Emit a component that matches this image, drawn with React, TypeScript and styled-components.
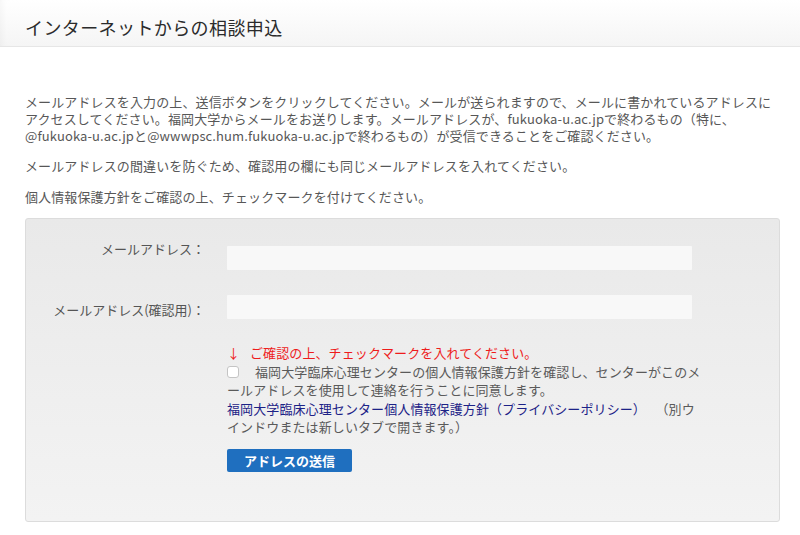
import React from "react";
import styled, { createGlobalStyle } from "styled-components";

const GlobalStyle = createGlobalStyle`
	html, body {
		margin: 0;
		padding: 0;
		background: #ffffff;
	}
	body {
		font-family: "Noto Sans CJK JP", "Noto Sans", sans-serif;
		color: #555555;
		-webkit-font-smoothing: antialiased;
	}
`;

const App = () => {
	return (
		<>
			<GlobalStyle />
			<Page>
				<Header>
					<Title>インターネットからの相談申込</Title>
				</Header>
				<Content>
					<Intro>
						メールアドレスを入力の上、送信ボタンをクリックしてください。メールが送られますので、メールに書かれているアドレスに
						<br />
						アクセスしてください。福岡大学からメールをお送りします。メールアドレスが、fukuoka-u.ac.jpで終わるもの（特に、
						<br />
						@fukuoka-u.ac.jpと@wwwpsc.hum.fukuoka-u.ac.jpで終わるもの）が受信できることをご確認ください。
					</Intro>
					<Intro>メールアドレスの間違いを防ぐため、確認用の欄にも同じメールアドレスを入れてください。</Intro>
					<Intro>個人情報保護方針をご確認の上、チェックマークを付けてください。</Intro>

					<FormBox>
						<FieldLabel htmlFor="mail">メールアドレス：</FieldLabel>
						<TextInput id="mail" type="text" $offset={6} />

						<FieldLabel htmlFor="mail-confirm" $offset={6}>
							メールアドレス(確認用)：
						</FieldLabel>
						<TextInput id="mail-confirm" type="text" />

						<Consent>
							<Notice>
								<Arrow>↓</Arrow>ご確認の上、チェックマークを入れてください。
							</Notice>
							<Agreement>
								<CheckBox type="checkbox" />
								福岡大学臨床心理センターの個人情報保護方針を確認し、センターがこのメ
								<br />
								ールアドレスを使用して連絡を行うことに同意します。
								<br />
								<PolicyLink href="#">
									福岡大学臨床心理センター個人情報保護方針（プライバシーポリシー）
								</PolicyLink>
								<Aside>（別ウ</Aside>
								<br />
								インドウまたは新しいタブで開きます。）
							</Agreement>
							<SubmitButton type="button">アドレスの送信</SubmitButton>
						</Consent>
					</FormBox>
				</Content>
			</Page>
		</>
	);
};

export default App;

const Page = styled.div`
	width: 800px;
	min-height: 535px;
	background: #ffffff;
`;

const Header = styled.header`
	height: 46px;
	padding: 0 25px;
	box-sizing: content-box;
	background: linear-gradient(180deg, #ffffff 0%, #f5f5f5 100%);
	border-bottom: 1px solid #e6e6e6;
	box-shadow: inset 6px 0 8px -6px rgba(0, 0, 0, 0.06);
`;

const Title = styled.h1`
	margin: 0;
	padding-top: 8px;
	font-size: 18px;
	line-height: 38px;
	font-weight: 400;
	letter-spacing: 0.4px;
	color: #2b2b2b;
`;

const Content = styled.main`
	padding: 45.5px 20px 0 25px;
`;

const Intro = styled.p`
	margin: 0 0 13.5px;
	font-size: 13px;
	line-height: 17px;
	letter-spacing: 0.12px;
	color: #575757;
	white-space: nowrap;
`;

const FormBox = styled.form`
	display: grid;
	grid-template-columns: 179px 465px;
	column-gap: 22px;
	row-gap: 25px;
	align-items: start;
	padding: 21px 0 49px;
	border: 1px solid #dcdcdc;
	border-radius: 3px;
	background: linear-gradient(180deg, #e9e9e9 0%, #f3f3f3 100%);
`;

const FieldLabel = styled.label<{ $offset?: number }>`
	padding-top: ${({ $offset }) => $offset ?? 0}px;
	font-size: 13px;
	line-height: 17px;
	text-align: right;
	color: #555555;
	white-space: nowrap;
`;

const TextInput = styled.input<{ $offset?: number }>`
	margin: ${({ $offset }) => $offset ?? 0}px 0 0;
	width: 465px;
	height: 24px;
	padding: 0 6px;
	box-sizing: border-box;
	border: none;
	border-radius: 1px;
	background: #f8f8f8;
	font: inherit;
	font-size: 13px;
	outline: none;
`;

const Consent = styled.div`
	grid-column: 2;
	display: flex;
	flex-direction: column;
	align-items: flex-start;
	font-size: 13px;
	line-height: 18.5px;
	letter-spacing: 0.1px;
`;

const Notice = styled.p`
	margin: 0;
	color: #ee1c1c;
	white-space: nowrap;
`;

const Arrow = styled.span`
	display: inline-block;
	width: 23px;
`;

const Agreement = styled.p`
	margin: 0;
	color: #5a5a5a;
	white-space: nowrap;
`;

const CheckBox = styled.input`
	appearance: none;
	display: inline-block;
	vertical-align: -1px;
	width: 12px;
	height: 12px;
	margin: 0 16px 0 0;
	box-sizing: border-box;
	border: 1px solid #c4c4c4;
	border-radius: 3px;
	background: #ffffff;
`;

const PolicyLink = styled.a`
	color: #1c2287;
	text-decoration: none;
`;

const Aside = styled.span`
	margin-left: 16px;
`;

const SubmitButton = styled.button`
	margin-top: 12.5px;
	width: 125px;
	height: 23px;
	padding: 0;
	border: none;
	border-radius: 2px;
	background: #1f6fbf;
	color: #ffffff;
	font-family: inherit;
	font-size: 13px;
	font-weight: 700;
	line-height: 23px;
	cursor: pointer;
`;
